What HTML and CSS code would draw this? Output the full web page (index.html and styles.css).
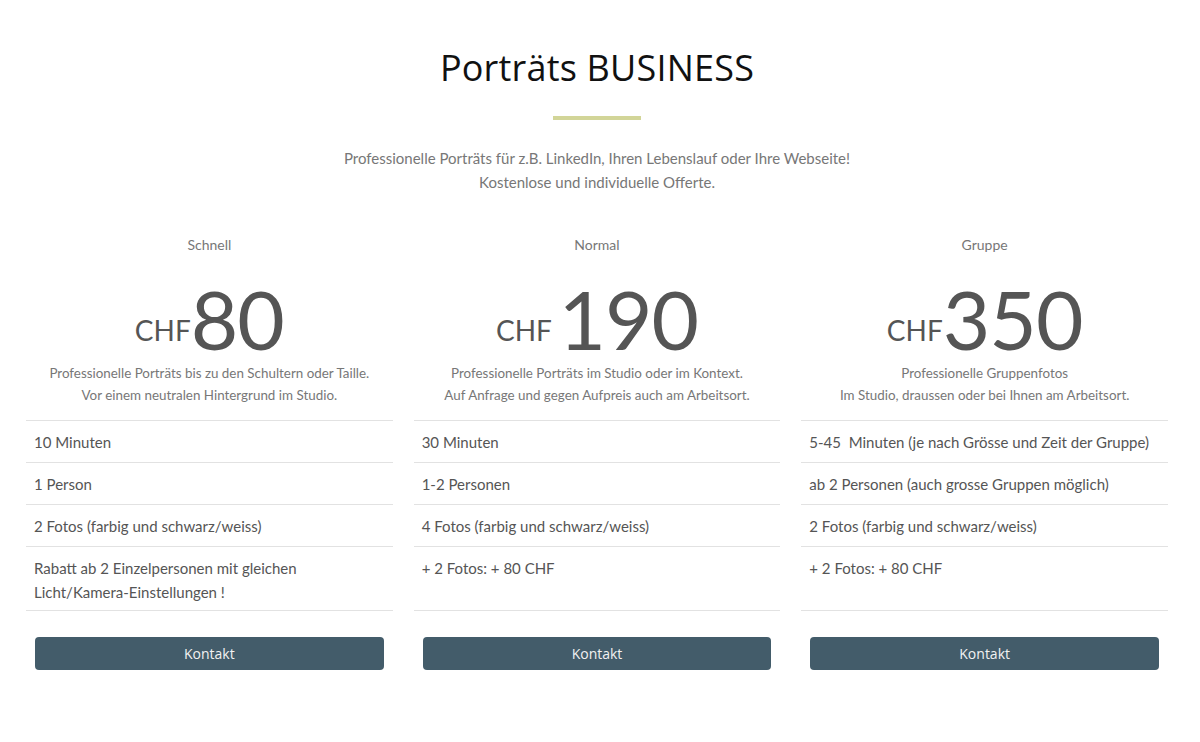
FILE: index.html
```html
<!DOCTYPE html>
<html lang="de">
<head>
<meta charset="utf-8">
<title>Porträts BUSINESS</title>
<link rel="stylesheet" href="styles.css">
</head>
<body>
<main class="page">
  <header class="intro">
    <h1 class="title">Porträts BUSINESS</h1>
    <div class="divider"></div>
    <p class="lead">Professionelle Porträts für z.B. LinkedIn, Ihren Lebenslauf oder Ihre Webseite!<br>Kostenlose und individuelle Offerte.</p>
  </header>

  <section class="plans">
    <article class="plan">
      <h2 class="plan-name">Schnell</h2>
      <div class="price"><span class="cur">CHF</span><span class="amount">80</span></div>
      <p class="desc">Professionelle Porträts bis zu den Schultern oder Taille.<br>Vor einem neutralen Hintergrund im Studio.</p>
      <ul class="features">
        <li>10 Minuten</li>
        <li>1 Person</li>
        <li>2 Fotos (farbig und schwarz/weiss)</li>
        <li>Rabatt ab 2 Einzelpersonen mit gleichen<br>Licht/Kamera-Einstellungen !</li>
      </ul>
      <a class="btn" href="#">Kontakt</a>
    </article>

    <article class="plan">
      <h2 class="plan-name">Normal</h2>
      <div class="price"><span class="cur">CHF&nbsp;</span><span class="amount">190</span></div>
      <p class="desc">Professionelle Porträts im Studio oder im Kontext.<br>Auf Anfrage und gegen Aufpreis auch am Arbeitsort.</p>
      <ul class="features">
        <li>30 Minuten</li>
        <li>1-2 Personen</li>
        <li>4 Fotos (farbig und schwarz/weiss)</li>
        <li>+ 2 Fotos: + 80 CHF</li>
      </ul>
      <a class="btn" href="#">Kontakt</a>
    </article>

    <article class="plan">
      <h2 class="plan-name">Gruppe</h2>
      <div class="price"><span class="cur">CHF</span><span class="amount">350</span></div>
      <p class="desc">Professionelle Gruppenfotos<br>Im Studio, draussen oder bei Ihnen am Arbeitsort.</p>
      <ul class="features">
        <li>5-45&nbsp; Minuten (je nach Grösse und Zeit der Gruppe)</li>
        <li>ab 2 Personen (auch grosse Gruppen möglich)</li>
        <li>2 Fotos (farbig und schwarz/weiss)</li>
        <li>+ 2 Fotos: + 80 CHF</li>
      </ul>
      <a class="btn" href="#">Kontakt</a>
    </article>
  </section>
</main>
</body>
</html>
```

FILE: styles.css
```css
* { box-sizing: border-box; }

html, body {
  margin: 0;
  padding: 0;
  background: #fff;
}

body {
  font-family: Lato, "Liberation Sans", sans-serif;
  color: #666;
}

.page {
  width: 1142px;
  margin: 0 0 0 26px;
  padding-top: 44px;
}

.intro {
  display: flex;
  flex-direction: column;
  align-items: center;
  text-align: center;
}

.title {
  margin: 0;
  font-family: "Open Sans", "Liberation Sans", sans-serif;
  font-weight: 400;
  font-size: 36px;
  line-height: 48px;
  color: #111;
  letter-spacing: 0.2px;
}

.divider {
  width: 88px;
  height: 4px;
  background: #d2d598;
  margin-top: 24px;
}

.lead {
  margin: 26px 0 0;
  font-size: 15px;
  line-height: 24px;
  color: #777;
}

.plans {
  display: grid;
  grid-template-columns: repeat(3, 1fr);
  column-gap: 21px;
  margin-top: 40px;
}

.plan {
  display: flex;
  flex-direction: column;
}

.plan-name {
  margin: 0;
  text-align: center;
  font-weight: 400;
  font-size: 14px;
  line-height: 22px;
  color: #777;
}

.price {
  display: flex;
  justify-content: center;
  align-items: baseline;
  margin-top: 30px;
  color: #555;
  line-height: 0.8;
}

.cur {
  font-size: 28px;
  position: relative;
  top: -9px;
}

.amount {
  font-size: 82px;
  font-weight: 400;
  letter-spacing: -1px;
}

.desc {
  margin: 10px 0 0;
  text-align: center;
  font-size: 13.4px;
  line-height: 22px;
  color: #777;
}

.features {
  list-style: none;
  margin: 14px 0 0;
  padding: 0;
  border-top: 1px solid #e2e2e2;
  flex: 1;
  display: flex;
  flex-direction: column;
}

.features li {
  padding: 9px 8px 8px;
  font-size: 15px;
  line-height: 24px;
  color: #555;
  border-bottom: 1px solid #e2e2e2;
}

.features li:last-child {
  flex: 1;
  padding-bottom: 6px;
}

.btn {
  display: block;
  margin: 26px 9px 0;
  height: 33px;
  line-height: 33px;
  border-radius: 4px;
  background: #435c6a;
  color: #f2f2f2;
  text-align: center;
  text-decoration: none;
  font-family: "Open Sans", "Liberation Sans", sans-serif;
  font-size: 14px;
}
```
